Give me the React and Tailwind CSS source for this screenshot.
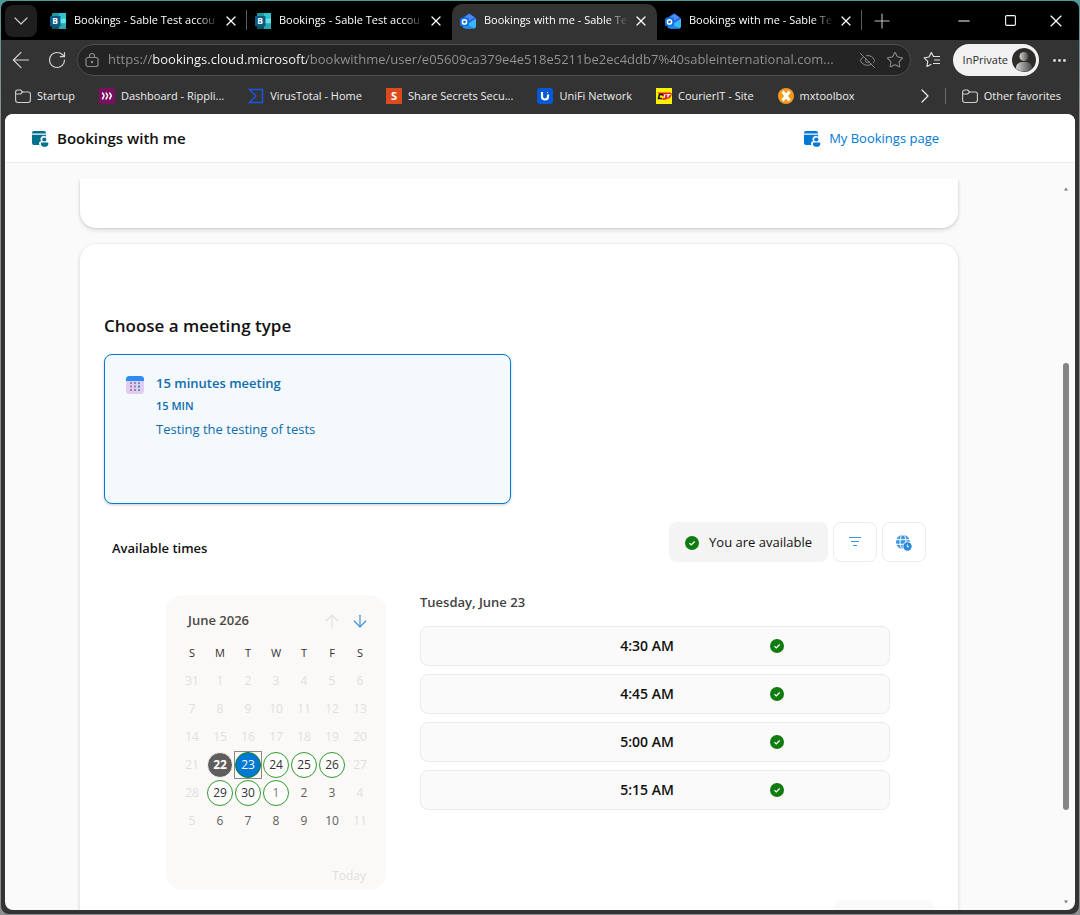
import {
    ArrowDown,
    ArrowLeft,
    ArrowUp,
    ChevronDown,
    ChevronRight,
    Ellipsis,
    EyeOff,
    Minus,
    Plus,
    RotateCw,
    Square,
    Star,
    X,
} from "lucide-react";

const TABS = [
    { title: "Bookings - Sable Test accou", icon: BookingsLogo },
    { title: "Bookings - Sable Test accou", icon: BookingsLogo },
    { title: "Bookings with me - Sable Te", icon: OutlookLogo, active: true },
    { title: "Bookings with me - Sable Te", icon: OutlookLogo },
];

const FAVORITES = [
    { label: "Startup", icon: FolderIcon },
    { label: "Dashboard - Rippli...", icon: RipplingLogo },
    { label: "VirusTotal - Home", icon: VirusTotalLogo },
    { label: "Share Secrets Secu...", icon: SecretsLogo },
    { label: "UniFi Network", icon: UnifiLogo },
    { label: "CourierIT - Site", icon: CourierLogo },
    { label: "mxtoolbox", icon: MxLogo },
];

// state: off = not bookable, out = next month, open = has free slots
const WEEKS = [
    [[31, "off"], [1, "off"], [2, "off"], [3, "off"], [4, "off"], [5, "off"], [6, "off"]],
    [[7, "off"], [8, "off"], [9, "off"], [10, "off"], [11, "off"], [12, "off"], [13, "off"]],
    [[14, "off"], [15, "off"], [16, "off"], [17, "off"], [18, "off"], [19, "off"], [20, "off"]],
    [[21, "off"], [22, "today"], [23, "selected"], [24, "open"], [25, "open"], [26, "open"], [27, "off"]],
    [[28, "off"], [29, "open"], [30, "open"], [1, "openOut"], [2, "out"], [3, "out"], [4, "off"]],
    [[5, "off"], [6, "out"], [7, "out"], [8, "out"], [9, "out"], [10, "out"], [11, "off"]],
];

const DAY_STYLES = {
    off: "text-[#e1dfdd]",
    out: "text-[#605e5c]",
    open: "border border-[#2f9a2f] bg-white text-[#323130]",
    openOut: "border border-[#2f9a2f] bg-white text-[#797775]",
    today: "bg-[#605e5c] font-bold text-white border border-[#faf9f8]",
    selected: "border border-[#107c10] bg-[#0078d4] text-white",
};

const SLOTS = ["4:30 AM", "4:45 AM", "5:00 AM", "5:15 AM"];

export default function App() {
    return (
        <div className="h-screen bg-[linear-gradient(#4f9a97,#8c8f90_12%,#8c8f90)] p-px font-['Open_Sans','Noto_Sans',sans-serif]">
            <div className="flex h-full flex-col overflow-hidden rounded-lg bg-[#333333]">
                <TabStrip />
                <Toolbar />
                <FavoritesBar />
                <div className="mx-1 mb-1 flex min-h-0 flex-1 flex-col overflow-hidden rounded-lg bg-[#fafafa]">
                    <PageHeader />
                    <div className="flex min-h-0 flex-1 pt-4">
                        <main className="min-w-0 flex-1 overflow-hidden pr-[100px] pl-[75px]">
                            <section className="h-[49px] rounded-b-2xl bg-white shadow-[0_2px_4px_rgba(0,0,0,0.14),0_0_2px_rgba(0,0,0,0.12)]" />
                            <BookingCard />
                        </main>
                        <ScrollBar />
                    </div>
                </div>
            </div>
        </div>
    );
}

function TabStrip() {
    return (
        <div className="flex h-[39px] shrink-0 items-center bg-black text-white">
            <button aria-label="Tab actions" className="mr-[5px] ml-1 flex h-8 w-8 shrink-0 items-center justify-center rounded-lg bg-[#1f1f1f]">
                <ChevronDown size={24} strokeWidth={1.2} color="#c8c8c8" />
            </button>
            <div role="tablist" className="flex h-full min-w-0">
                {TABS.map(({ title, icon: Icon, active }, i) => (
                    <div
                        key={i}
                        className={`relative flex w-[205px] min-w-0 items-center gap-2 pr-2 pl-2 ${active ? "mt-[3px] rounded-t-[10px] bg-[#333333] pb-[3px]" : ""}`}
                    >
                        <Icon />
                        <button
                            role="tab"
                            aria-selected={Boolean(active)}
                            className="min-w-0 flex-1 overflow-hidden mask-r-from-[85%] text-left text-[11px] whitespace-nowrap"
                        >
                            {title}
                        </button>
                        <button aria-label="Close tab" className="-ml-1">
                            <X size={16} strokeWidth={1.8} />
                        </button>
                        {i !== 1 && i !== 2 && <span className="absolute top-[9px] right-0 h-5 w-px bg-[#5c5c5c]" />}
                    </div>
                ))}
            </div>
            <button aria-label="New tab" className="ml-2 shrink-0">
                <Plus size={24} strokeWidth={1.1} color="#c0c0c0" />
            </button>
            <div className="ml-auto flex shrink-0 items-center">
                <button aria-label="Minimize" className="flex w-[46px] justify-center">
                    <Minus size={18} strokeWidth={1.4} />
                </button>
                <button aria-label="Maximize" className="flex w-[46px] justify-center">
                    <Square size={13} strokeWidth={2} />
                </button>
                <button aria-label="Close" className="flex w-[46px] justify-center">
                    <X size={20} strokeWidth={1.4} />
                </button>
            </div>
        </div>
    );
}

function Toolbar() {
    return (
        <div className="flex h-10 shrink-0 items-center pr-[11px] pl-[7px] text-[#d6d6d6]">
            <button aria-label="Back">
                <ArrowLeft size={26} strokeWidth={1.1} />
            </button>
            <button aria-label="Refresh" className="ml-[13px]">
                <RotateCw size={20} strokeWidth={1.4} />
            </button>
            <div className="ml-[10px] flex h-8 min-w-0 flex-1 items-center rounded-full border border-[#4e4e4e] bg-[#242424] pr-[6px] pl-[6px] text-[#8c8c8c]">
                <LockIcon />
                <input
                    aria-label="Address"
                    readOnly
                    value="https://bookings.cloud.microsoft/bookwithme/user/e05609ca379e4e518e5211be2ec4ddb7%40sableinternational.com..."
                    className="ml-2 min-w-0 flex-1 bg-[linear-gradient(90deg,#949494_45px,#ffffff_45px,#ffffff_199px,#949494_199px)] bg-clip-text text-[13px] text-transparent outline-none"
                />
                <EyeOff size={17} strokeWidth={1.4} className="ml-3 shrink-0" />
                <Star size={18} strokeWidth={1.4} className="ml-[10px] shrink-0" />
            </div>
            <button aria-label="Favorites" className="ml-3">
                <FavoritesIcon />
            </button>
            <button className="ml-3 flex h-8 items-center gap-1 rounded-full bg-[#f2f2f2] pr-[3px] pl-[10px] text-[11px] text-[#2b2b2b]">
                InPrivate
                <Avatar />
            </button>
            <button aria-label="Settings and more" className="ml-3">
                <Ellipsis size={17} strokeWidth={2.2} />
            </button>
        </div>
    );
}

function FavoritesBar() {
    return (
        <div className="flex h-[34px] shrink-0 items-center pr-[18px] pb-[2px] pl-[14px] text-[11px] text-[#ededed]">
            <nav aria-label="Favorites bar" className="flex min-w-0 gap-6 overflow-hidden">
                {FAVORITES.map(({ label, icon: Icon }) => (
                    <a key={label} href="#" className="flex items-center gap-[6px] whitespace-nowrap">
                        <Icon />
                        {label}
                    </a>
                ))}
            </nav>
            <button aria-label="More favorites" className="ml-auto">
                <ChevronRight size={24} strokeWidth={1.2} />
            </button>
            <span className="mx-2 h-4 w-px shrink-0 bg-[#6a6a6a]" />
            <button className="ml-2 flex shrink-0 items-center gap-[6px]">
                <FolderIcon />
                Other favorites
            </button>
        </div>
    );
}

function PageHeader() {
    return (
        <header className="flex h-[49px] shrink-0 items-center justify-between border-b border-[#ebebeb] bg-white pt-px pr-[136px] pl-[26px]">
            <div className="flex items-center gap-2">
                <BookingPersonIcon className="text-[#03708f]" />
                <h1 className="text-[15px] font-semibold text-[#111111]">Bookings with me</h1>
            </div>
            <a href="#" className="flex items-center gap-2 text-[13px] text-[#0078d4]">
                <BookingPersonIcon />
                My Bookings page
            </a>
        </header>
    );
}

function BookingCard() {
    return (
        <section className="mt-4 rounded-t-2xl bg-white px-6 pt-[70px] shadow-[0_2px_4px_rgba(0,0,0,0.14),0_0_2px_rgba(0,0,0,0.08)]">
            <h2 className="text-[17px] leading-6 font-semibold text-[#111111]">Choose a meeting type</h2>
            <div className="mt-4 grid grid-cols-2 gap-4">
                <button className="flex h-[150px] items-start gap-3 rounded-lg border border-[#0078d4] bg-[#f3f9fd] px-[21px] pt-4 text-left text-[#0f6cae] shadow-[0_1px_3px_rgba(0,0,0,0.2)]">
                    <CalendarIcon />
                    <span className="flex flex-col">
                        <span className="text-[13px] leading-6 font-semibold">15 minutes meeting</span>
                        <span className="text-[11px] leading-[22px] font-semibold">15 MIN</span>
                        <span className="text-[13px] leading-6">Testing the testing of tests</span>
                    </span>
                </button>
            </div>

            <div className="mt-[18px] flex items-start gap-[5px] px-2">
                <h3 className="mt-4 mr-auto text-[13px] leading-5 font-semibold text-[#111111]">Available times</h3>
                <div className="flex h-10 items-center gap-[10px] rounded-lg bg-[#f4f4f4] px-4 pt-[2px] text-[13px] text-[#111111]">
                    <CheckIcon />
                    You are available
                </div>
                <button aria-label="Filter" className="flex h-10 w-11 items-center justify-center rounded-lg border border-[#ebebeb]">
                    <FilterIcon />
                </button>
                <button aria-label="Time zone" className="flex h-10 w-11 items-center justify-center rounded-lg border border-[#ebebeb] pt-[2px]">
                    <GlobeClockIcon />
                </button>
            </div>

            <div className="mt-[33px] flex items-start gap-[34px] pr-11 pl-[62px]">
                <Calendar />
                <div className="min-w-0 flex-1">
                    <h3 className="mb-4 text-[13px] leading-[15px] font-semibold text-[#424242]">Tuesday, June 23</h3>
                    <ul className="flex flex-col gap-2">
                        {SLOTS.map((time) => (
                            <li key={time}>
                                <button className="flex h-10 w-full items-center justify-center gap-24 rounded-lg border border-[#ebebeb] bg-[#fafafa] pl-[94px] text-sm font-semibold text-[#111111]">
                                    {time}
                                    <CheckIcon />
                                </button>
                            </li>
                        ))}
                    </ul>
                </div>
            </div>
            <div className="mt-[10px] flex justify-end">
                <button disabled aria-label="Next" className="h-8 w-[100px] rounded-lg bg-[#fafafa]" />
            </div>
        </section>
    );
}

function Calendar() {
    return (
        <div className="h-[295px] w-[220px] shrink-0 rounded-2xl bg-[#faf9f8] px-3 pt-3">
            <div className="flex h-7 items-center pl-[10px]">
                <span className="mr-auto text-[13px] font-semibold text-[#4a4846]">June 2026</span>
                <button aria-label="Previous month" className="flex w-7 justify-center text-[#e1dfdd]">
                    <ArrowUp size={20} strokeWidth={1.3} />
                </button>
                <button aria-label="Next month" className="flex w-7 justify-center text-[#2b88d8]">
                    <ArrowDown size={20} strokeWidth={1.3} />
                </button>
            </div>
            <table className="mt-1 w-full table-fixed text-center text-[12px] text-[#323130]">
                <thead>
                    <tr className="h-7">
                        {["S", "M", "T", "W", "T", "F", "S"].map((day, i) => (
                            <th key={i} className="p-0 text-[11px] font-normal">{day}</th>
                        ))}
                    </tr>
                </thead>
                <tbody>
                    {WEEKS.map((week, row) => (
                        <tr key={row} className="h-7">
                            {week.map(([day, state]) => (
                                <td key={day} className={`p-0 ${state === "selected" ? "outline -outline-offset-1 outline-[#8a8886]" : ""}`}>
                                    <button className={`mx-auto flex h-[26px] w-[26px] items-center justify-center rounded-full ${DAY_STYLES[state]}`}>
                                        {day}
                                    </button>
                                </td>
                            ))}
                        </tr>
                    ))}
                </tbody>
            </table>
            <div className="mt-[29px] flex justify-end pr-2">
                <button disabled className="text-xs leading-6 text-[#e1dfdd]">Today</button>
            </div>
        </div>
    );
}

function ScrollBar() {
    return (
        <div aria-hidden="true" className="flex w-[19px] shrink-0 flex-col items-center pt-2 pb-[6px] -ml-[2px]">
            <svg width="6" height="4" className="shrink-0"><path d="M1 3.5 3 0.5 5 3.5Z" fill="#7a7a7a" /></svg>
            <span className="flex-[172]" />
            <span className="w-[6px] flex-[446] rounded-full bg-[#858585]" />
            <span className="flex-[90]" />
            <svg width="6" height="4" className="shrink-0"><path d="M1 0.5 3 3.5 5 0.5Z" fill="#7a7a7a" /></svg>
        </div>
    );
}

function BookingsLogo() {
    return (
        <svg width="16" height="16" viewBox="0 0 16 16" className="shrink-0">
            <rect x="2" width="14" height="16" rx="1" fill="#1b9ba5" />
            <rect x="9" width="7" height="5.5" fill="#2fc5cf" />
            <rect x="9" y="5.5" width="7" height="5" fill="#60e4ec" />
            <rect x="9" y="10.5" width="7" height="5.5" fill="#2aa9b5" />
            <rect x="2" y="12" width="7" height="4" fill="#14505c" />
            <rect y="3" width="10.5" height="10.5" rx="1" fill="#0b5a86" />
            <text x="5.2" y="11.3" textAnchor="middle" fontSize="8.5" fontWeight="700" fill="#fff">B</text>
        </svg>
    );
}

function OutlookLogo() {
    return (
        <svg width="16" height="16" viewBox="0 0 16 16" className="shrink-0">
            <path d="M1.5 5.5 8.2.7a1.5 1.5 0 0 1 1.6 0L15 4.4a2 2 0 0 1 .8 1.6L9 11 2 8Z" fill="#2b5fe0" />
            <path d="M5 4 9.5 1l5 3.6L8 8.5Z" fill="#4b8cf5" />
            <path d="M16 5.5V13a2.5 2.5 0 0 1-2.5 2.5H5L6 12Z" fill="#39b8fb" />
            <path d="M2.5 9.5 14.8 15.2a3 3 0 0 1-1.3.3H5A2.5 2.5 0 0 1 2.5 13Z" fill="#1f8df0" />
            <rect y="4.5" width="9" height="8.8" rx="1.8" fill="#0f6fdc" />
            <circle cx="4.5" cy="8.9" r="2.1" fill="none" stroke="#fff" strokeWidth="1.5" />
        </svg>
    );
}

function FolderIcon() {
    return (
        <svg width="16" height="16" viewBox="0 0 16 16" fill="none" stroke="#d0d0d0" strokeWidth="1.1" className="shrink-0">
            <path d="M.6 4a2 2 0 0 1 2-2h3l2 2h5.800a2 2 0 0 1 2 2v6a2.500 2.500 0 0 1-2.500 2.500H3.100A2.500 2.500 0 0 1 .6 12Z" />
            <path d="M.6 6h5l2-2" />
        </svg>
    );
}

function RipplingLogo() {
    return (
        <svg width="16" height="16" viewBox="0 0 16 16" className="shrink-0">
            <rect width="16" height="16" fill="#7a0f5f" />
            <path
                d="M3.500 4.500c0 1.700 1.500 1.700 1.500 3.200S3.500 9.500 3.500 11.500M7.100 4.500c0 1.700 1.500 1.700 1.500 3.200S7.100 9.500 7.100 11.500M10.700 4.500c0 1.700 1.500 1.700 1.500 3.200S10.700 9.500 10.700 11.500"
                fill="none"
                stroke="#fff"
                strokeWidth="1.500"
            />
        </svg>
    );
}

function VirusTotalLogo() {
    return (
        <svg width="16" height="16" viewBox="0 0 16 16" className="shrink-0">
            <path d="M1.500 1.500h13v13h-13L8 8Z" fill="none" stroke="#1a56e0" strokeWidth="1.500" />
        </svg>
    );
}

function SecretsLogo() {
    return (
        <span className="flex h-4 w-4 shrink-0 items-center justify-center bg-[#dc4a20] text-[11px] leading-4 font-bold text-white">S</span>
    );
}

function UnifiLogo() {
    return (
        <svg width="16" height="16" viewBox="0 0 16 16" className="shrink-0">
            <rect width="16" height="16" rx="3" fill="#0559d6" />
            <path d="M5 4v4.500a3 3 0 0 0 6 0V6.500" fill="none" stroke="#fff" strokeWidth="2.200" />
            <path d="M10 4h1v1h-1z" fill="#fff" />
        </svg>
    );
}

function CourierLogo() {
    return (
        <svg width="16" height="16" viewBox="0 0 16 16" className="shrink-0">
            <rect width="16" height="16" fill="#fdf000" />
            <path d="M1 4.500h13.500L16 6l-2 4-6 2H6l2-3Z" fill="#e01f26" />
            <path d="M7 6.500H3.500L2.500 10.500H6" fill="none" stroke="#111" strokeWidth="1.600" />
            <path d="M9 6.200 8 10M10.500 6.600h4M12.500 6.600 11.600 9.500" stroke="#fff" strokeWidth="1.200" />
        </svg>
    );
}

function MxLogo() {
    return (
        <svg width="16" height="16" viewBox="0 0 16 16" className="shrink-0">
            <circle cx="8" cy="8" r="8" fill="#f59a1c" />
            <path d="M4.500 3.500 11.500 12.500M11.500 3.500 4.500 12.500" stroke="#fff" strokeWidth="3" />
        </svg>
    );
}

function LockIcon() {
    return (
        <svg width="16" height="16" viewBox="0 0 16 16" fill="none" stroke="currentColor" strokeWidth="1.200" className="shrink-0">
            <rect x="2" y="5.500" width="12" height="9" rx="2" />
            <path d="M5.500 5.500V4a2.500 2.500 0 0 1 5 0v1.500" />
            <circle cx="8" cy="10" r="0.600" fill="currentColor" />
        </svg>
    );
}

function FavoritesIcon() {
    return (
        <svg width="18" height="18" viewBox="0 0 18 18" fill="none" stroke="#e0e0e0" strokeWidth="1.200" strokeLinejoin="round">
            <path d="M10.500 5.500 8.300 1.500 6 6 1.200 6.800 4.700 10.300 4 15.500 8.300 13.300" />
            <path d="M10 5.500h7M11 9h6M10 12.500h7" />
        </svg>
    );
}

function Avatar() {
    return (
        <svg width="24" height="24" viewBox="0 0 24 24" className="shrink-0">
            <defs>
                <linearGradient id="avatar-shade" x1="0" x2="1">
                    <stop offset="0" stopColor="#d5d3d0" />
                    <stop offset="1" stopColor="#4a4846" />
                </linearGradient>
            </defs>
            <circle cx="12" cy="12" r="12" fill="#2e2b28" />
            <circle cx="12" cy="8.500" r="4.500" fill="url(#avatar-shade)" />
            <path d="M4 20.500c0-5 3-6.500 8-6.500s8 1.500 8 6.500a12 12 0 0 1-16 0Z" fill="url(#avatar-shade)" />
        </svg>
    );
}

function BookingPersonIcon({ className = "" }) {
    return (
        <svg width="18" height="18" viewBox="0 0 18 18" fill="currentColor" className={`shrink-0 ${className}`}>
            <path d="M3 1h10a2 2 0 0 1 2 2v.5H1V3a2 2 0 0 1 2-2Z" />
            <path d="M1 4.800h14v2a3.200 3.200 0 0 0-4.800 4.200A2.500 2.500 0 0 0 8.500 15H3a2 2 0 0 1-2-2Z" />
            <circle cx="13.300" cy="9.500" r="2.100" />
            <path d="M11 12.500h5.200a1.200 1.200 0 0 1 1.200 1.200c0 2-1.500 3.100-3.800 3.100S9.800 15.700 9.800 13.700a1.200 1.200 0 0 1 1.200-1.200Z" />
        </svg>
    );
}

function CalendarIcon() {
    return (
        <svg width="18" height="18" viewBox="0 0 18 18" className="mt-[5px] shrink-0">
            <rect width="18" height="18" rx="3.500" fill="#e0cdf0" />
            <path d="M0 5V3.500A3.500 3.500 0 0 1 3.500 0h11A3.500 3.500 0 0 1 18 3.500V5Z" fill="#2a8cf4" />
            <path d="M4 6h2v2H4zM8 6h2v2H8zM12 6h2v2h-2zM4 9.500h2v2H4zM8 9.500h2v2H8zM4 13h2v2H4zM8 13h2v2H8zM12 13h2v2h-2z" fill="#9a86ac" />
            <path d="M12 9.500h2v2h-2z" fill="#2a8cf4" />
        </svg>
    );
}

function CheckIcon() {
    return (
        <svg width="14" height="14" viewBox="0 0 14 14" className="shrink-0">
            <circle cx="7" cy="7" r="7" fill="#107c10" />
            <path d="M4.500 7.200 6.300 8.900 9.700 5.500" fill="none" stroke="#fff" strokeWidth="1.300" />
        </svg>
    );
}

function FilterIcon() {
    return (
        <svg width="14" height="12" viewBox="0 0 14 12" stroke="#3a96e0" strokeWidth="1">
            <path d="M1 1.500h12M3 5.500h8M5 9.500h4" />
        </svg>
    );
}

function GlobeClockIcon() {
    return (
        <svg width="16" height="16" viewBox="0 0 16 16">
            <circle cx="7" cy="7" r="7" fill="#3a96e0" />
            <path d="M0 4.700h14M0 9.300h14" stroke="#fff" strokeWidth="1" />
            <ellipse cx="7" cy="7" rx="3" ry="7.200" fill="none" stroke="#fff" />
            <circle cx="11.500" cy="11.500" r="5" fill="#fff" />
            <circle cx="11.500" cy="11.500" r="4.200" fill="#2b88d8" />
            <path d="M11.300 9.500v2.300h1.700" fill="none" stroke="#fff" strokeWidth="0.900" />
        </svg>
    );
}
